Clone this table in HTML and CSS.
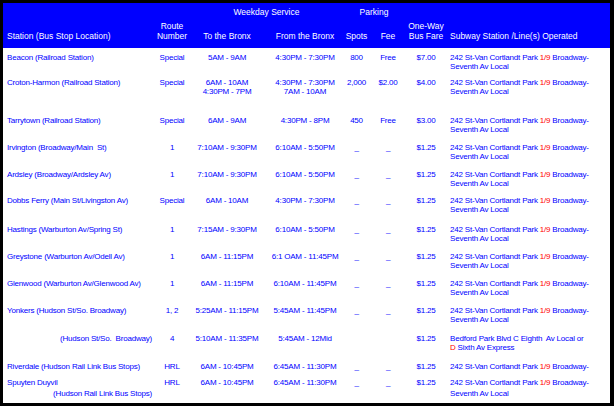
FILE: index.html
```html
<!DOCTYPE html>
<html>
<head>
<meta charset="utf-8">
<link rel="stylesheet" href="styles.css">
</head>
<body>
<div class="frame">
  <div class="head">
    <div class="span-week">Weekday Service</div>
    <div class="span-park">Parking</div>
    <div class="hc st">Station (Bus Stop Location)</div>
    <div class="hc c"><span>Route<br>Number</span></div>
    <div class="hc c"><span>To the Bronx</span></div>
    <div class="hc c"><span>From the Bronx</span></div>
    <div class="hc c"><span>Spots</span></div>
    <div class="hc c"><span>Fee</span></div>
    <div class="hc c"><span>One-Way<br>Bus Fare</span></div>
    <div class="hc sub">Subway Station /Line(s) Operated</div>
  </div>
  <div class="body">
    <div class="row h25">
      <div class="st">Beacon (Railroad Station)</div>
      <div class="c"><span>Special</span></div>
      <div class="c"><span>5AM - 9AM</span></div>
      <div class="c"><span>4:30PM - 7:30PM</span></div>
      <div class="c"><span>800</span></div>
      <div class="c"><span>Free</span></div>
      <div class="c"><span>$7.00</span></div>
      <div class="sub">242 St-Van Cortlandt Park <span class="red">1/9</span> Broadway-<br>Seventh Av Local</div>
    </div>
    <div class="row h38">
      <div class="st">Croton-Harmon (Railroad Station)</div>
      <div class="c"><span>Special</span></div>
      <div class="c"><span>6AM - 10AM<br>4:30PM - 7PM</span></div>
      <div class="c"><span>4:30PM - 7:30PM<br>7AM - 10AM</span></div>
      <div class="c"><span>2,000</span></div>
      <div class="c"><span>$2.00</span></div>
      <div class="c"><span>$4.00</span></div>
      <div class="sub">242 St-Van Cortlandt Park <span class="red">1/9</span> Broadway-<br>Seventh Av Local</div>
    </div>
    <div class="row">
      <div class="st">Tarrytown (Railroad Station)</div>
      <div class="c"><span>Special</span></div>
      <div class="c"><span>6AM - 9AM</span></div>
      <div class="c"><span>4:30PM - 8PM</span></div>
      <div class="c"><span>450</span></div>
      <div class="c"><span>Free</span></div>
      <div class="c"><span>$3.00</span></div>
      <div class="sub">242 St-Van Cortlandt Park <span class="red">1/9</span> Broadway-<br>Seventh Av Local</div>
    </div>
    <div class="row">
      <div class="st">Irvington (Broadway/Main&nbsp; St)</div>
      <div class="c"><span>1</span></div>
      <div class="c"><span>7:10AM - 9:30PM</span></div>
      <div class="c"><span>6:10AM - 5:50PM</span></div>
      <div class="c"><span>_</span></div>
      <div class="c"><span>_</span></div>
      <div class="c"><span>$1.25</span></div>
      <div class="sub">242 St-Van Cortlandt Park <span class="red">1/9</span> Broadway-<br>Seventh Av Local</div>
    </div>
    <div class="row h26">
      <div class="st">Ardsley (Broadway/Ardsley Av)</div>
      <div class="c"><span>1</span></div>
      <div class="c"><span>7:10AM - 9:30PM</span></div>
      <div class="c"><span>6:10AM - 5:50PM</span></div>
      <div class="c"><span>_</span></div>
      <div class="c"><span>_</span></div>
      <div class="c"><span>$1.25</span></div>
      <div class="sub">242 St-Van Cortlandt Park <span class="red">1/9</span> Broadway-<br>Seventh Av Local</div>
    </div>
    <div class="row h29">
      <div class="st">Dobbs Ferry (Main St/Livingston Av)</div>
      <div class="c"><span>Special</span></div>
      <div class="c"><span>6AM - 10AM</span></div>
      <div class="c"><span>4:30PM - 7:30PM</span></div>
      <div class="c"><span>_</span></div>
      <div class="c"><span>_</span></div>
      <div class="c"><span>$1.25</span></div>
      <div class="sub">242 St-Van Cortlandt Park <span class="red">1/9</span> Broadway-<br>Seventh Av Local</div>
    </div>
    <div class="row">
      <div class="st">Hastings (Warburton Av/Spring St)</div>
      <div class="c"><span>1</span></div>
      <div class="c"><span>7:15AM - 9:30PM</span></div>
      <div class="c"><span>6:10AM - 5:50PM</span></div>
      <div class="c"><span>_</span></div>
      <div class="c"><span>_</span></div>
      <div class="c"><span>$1.25</span></div>
      <div class="sub">242 St-Van Cortlandt Park <span class="red">1/9</span> Broadway-<br>Seventh Av Local</div>
    </div>
    <div class="row">
      <div class="st">Greystone (Warburton Av/Odell Av)</div>
      <div class="c"><span>1</span></div>
      <div class="c"><span>6AM - 11:15PM</span></div>
      <div class="c"><span>6:1 OAM - 11:45PM</span></div>
      <div class="c"><span>_</span></div>
      <div class="c"><span>_</span></div>
      <div class="c"><span>$1.25</span></div>
      <div class="sub">242 St-Van Cortlandt Park <span class="red">1/9</span> Broadway-<br>Seventh Av Local</div>
    </div>
    <div class="row">
      <div class="st">Glenwood (Warburton Av/Glenwood Av)</div>
      <div class="c"><span>1</span></div>
      <div class="c"><span>6AM - 11:15PM</span></div>
      <div class="c"><span>6:10AM - 11:45PM</span></div>
      <div class="c"><span>_</span></div>
      <div class="c"><span>_</span></div>
      <div class="c"><span>$1.25</span></div>
      <div class="sub">242 St-Van Cortlandt Park <span class="red">1/9</span> Broadway-<br>Seventh Av Local</div>
    </div>
    <div class="row h28">
      <div class="st">Yonkers (Hudson St/So. Broadway)</div>
      <div class="c"><span>1, 2</span></div>
      <div class="c"><span>5:25AM - 11:15PM</span></div>
      <div class="c"><span>5:45AM - 11:45PM</span></div>
      <div class="c"><span>_</span></div>
      <div class="c"><span>_</span></div>
      <div class="c"><span>$1.25</span></div>
      <div class="sub">242 St-Van Cortlandt Park <span class="red">1/9</span> Broadway-<br>Seventh Av Local</div>
    </div>
    <div class="row h28">
      <div class="st right">(Hudson St/So.&nbsp; Broadway)</div>
      <div class="c"><span>4</span></div>
      <div class="c"><span>5:10AM - 11:35PM</span></div>
      <div class="c"><span>5:45AM - 12Mid</span></div>
      <div class="c"><span></span></div>
      <div class="c"><span></span></div>
      <div class="c"><span>$1.25</span></div>
      <div class="sub">Bedford Park Blvd C Eighth&nbsp; Av Local or<br><span class="red">D</span> Sixth Av Express</div>
    </div>
    <div class="row h16">
      <div class="st">Riverdale (Hudson Rail Link Bus Stops)</div>
      <div class="c"><span>HRL</span></div>
      <div class="c"><span>6AM - 10:45PM</span></div>
      <div class="c"><span>6:45AM - 11:30PM</span></div>
      <div class="c"><span>_</span></div>
      <div class="c"><span>_</span></div>
      <div class="c"><span>$1.25</span></div>
      <div class="sub">242 St-Van Cortlandt Park <span class="red">1/9</span> Broadway-</div>
    </div>
    <div class="row last">
      <div class="st">Spuyten Duyvil<br><span class="push">(Hudson Rail Link Bus Stops)</span></div>
      <div class="c"><span>HRL</span></div>
      <div class="c"><span>6AM - 10:45PM</span></div>
      <div class="c"><span>6:45AM - 11:30PM</span></div>
      <div class="c"><span>_</span></div>
      <div class="c"><span>_</span></div>
      <div class="c"><span>$1.25</span></div>
      <div class="sub">242 St-Van Cortlandt Park <span class="red">1/9</span> Broadway-<br>Seventh Av Local</div>
    </div>
  </div>
</div>
</body>
</html>
```
FILE: styles.css
```css
html, body {
  margin: 0;
  padding: 0;
  background: #ffffff;
}
.frame {
  width: 614px;
  height: 406px;
  box-sizing: border-box;
  border-style: solid;
  border-color: #000000;
  border-width: 3px 4px 3px 3px;
  background: #ffffff;
  font-family: "Liberation Sans", Arial, sans-serif;
  overflow: hidden;
}
.head, .row {
  display: grid;
  grid-template-columns: 151px 36px 74px 82px 21px 42px 34px 1fr;
}
.head {
  background: #0000ff;
  color: #ffffff;
  font-size: 8.5px;
  line-height: 10px;
  height: 45px;
  box-sizing: border-box;
  padding: 4px 0 7px 0;
  grid-template-rows: 14px 20px;
  white-space: nowrap;
}
.span-week {
  grid-column: 3 / 5;
  grid-row: 1;
  text-align: center;
  padding-right: 3px;
}
.span-park {
  grid-column: 5 / 7;
  grid-row: 1;
  text-align: center;
  padding-right: 7px;
}
.hc {
  grid-row: 2;
  align-self: end;
}
.body {
  padding-top: 5px;
  color: #0000ff;
  font-size: 8px;
  line-height: 9px;
  letter-spacing: -0.2px;
  white-space: nowrap;
}
.row {
  height: 27px;
  align-items: start;
}
.row.h25 { height: 25px; }
.row.h26 { height: 26px; }
.row.h28 { height: 28px; }
.row.h29 { height: 29px; }
.row.h38 { height: 38px; }
.row.h16 { height: 16px; }
.row.last { line-height: 10.5px; height: 25px; }
.st {
  padding-left: 4px;
}
.st.right {
  text-align: right;
  padding-right: 2px;
}
.push {
  display: block;
  text-align: right;
  padding-right: 2px;
}
.c {
  display: flex;
  justify-content: center;
}
.c > span {
  display: block;
  text-align: center;
  white-space: nowrap;
}
.sub {
  padding-left: 7px;
}
.red {
  color: #ff0000;
}
```
